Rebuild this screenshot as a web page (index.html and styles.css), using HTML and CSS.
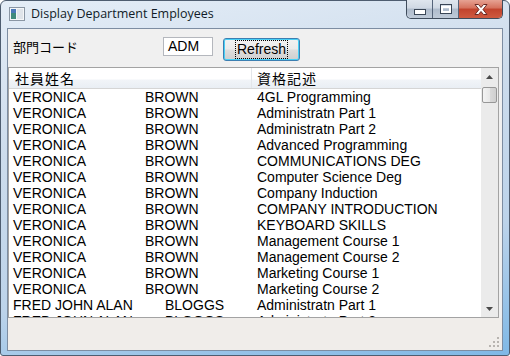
FILE: index.html
```html
<!DOCTYPE html>
<html lang="ja">
<head>
    <meta charset="UTF-8" />
    <title>Display Department Employees</title>
    <link rel="stylesheet" href="styles.css">
</head>
<body>
    <div class="window">
        <div class="titlebar">
            <svg class="app-icon" width="16" height="14" viewBox="0 0 16 14">
                <rect x="0.5" y="0.5" width="15" height="13" fill="#f4f6f8" stroke="#8a96a4"/>
                <rect x="2" y="2" width="5" height="10" fill="#3f8a7c"/>
                <rect x="2" y="2" width="5" height="4" fill="#4a78b8"/>
                <rect x="8" y="2" width="6" height="10" fill="#dfe4ea"/>
            </svg>
            <span class="title">Display Department Employees</span>
            <div class="caption-buttons">
                <div class="cap cap-min">
                    <svg width="12" height="6" viewBox="0 0 12 6"><rect x="0.5" y="0.5" width="11" height="5" fill="#fff" stroke="#3a4656"/></svg>
                </div>
                <div class="cap cap-max">
                    <svg width="12" height="10" viewBox="0 0 12 10"><rect x="0.5" y="0.5" width="11" height="9" fill="none" stroke="#3a4656"/><rect x="2" y="3" width="8" height="5" fill="none" stroke="#fff" stroke-width="2"/></svg>
                </div>
                <div class="cap cap-close">
                    <svg width="16" height="11" viewBox="0 0 16 11"><path d="M2 0.5h3.5l2.5 3 2.5-3h3.5l-4 5 4 5h-3.5l-2.5-3-2.5 3h-3.5l4-5z" fill="#fff" stroke="#6b2a24" stroke-width="1"/></svg>
                </div>
            </div>
        </div>
        <div class="client">
            <div class="toolbar">
                <span class="label">部門コード</span>
                <div class="textbox">ADM</div>
                <button class="btn"><span class="focus">Refresh</span></button>
            </div>
            <div class="listview">
                <div class="lv-main">
                    <div class="lv-header">
                        <div class="hcol1">社員姓名</div>
                        <div class="hcol2">資格記述</div>
                    </div>
                    <div class="lv-body">
                        <div class="row"><div class="c1"><span class="fn">VERONICA</span>BROWN</div><div class="c2">4GL Programming</div></div>
                        <div class="row"><div class="c1"><span class="fn">VERONICA</span>BROWN</div><div class="c2">Administratn Part 1</div></div>
                        <div class="row"><div class="c1"><span class="fn">VERONICA</span>BROWN</div><div class="c2">Administratn Part 2</div></div>
                        <div class="row"><div class="c1"><span class="fn">VERONICA</span>BROWN</div><div class="c2">Advanced Programming</div></div>
                        <div class="row"><div class="c1"><span class="fn">VERONICA</span>BROWN</div><div class="c2">COMMUNICATIONS DEG</div></div>
                        <div class="row"><div class="c1"><span class="fn">VERONICA</span>BROWN</div><div class="c2">Computer Science Deg</div></div>
                        <div class="row"><div class="c1"><span class="fn">VERONICA</span>BROWN</div><div class="c2">Company Induction</div></div>
                        <div class="row"><div class="c1"><span class="fn">VERONICA</span>BROWN</div><div class="c2">COMPANY INTRODUCTION</div></div>
                        <div class="row"><div class="c1"><span class="fn">VERONICA</span>BROWN</div><div class="c2">KEYBOARD SKILLS</div></div>
                        <div class="row"><div class="c1"><span class="fn">VERONICA</span>BROWN</div><div class="c2">Management Course 1</div></div>
                        <div class="row"><div class="c1"><span class="fn">VERONICA</span>BROWN</div><div class="c2">Management Course 2</div></div>
                        <div class="row"><div class="c1"><span class="fn">VERONICA</span>BROWN</div><div class="c2">Marketing Course 1</div></div>
                        <div class="row"><div class="c1"><span class="fn">VERONICA</span>BROWN</div><div class="c2">Marketing Course 2</div></div>
                        <div class="row"><div class="c1"><span class="fn long">FRED JOHN ALAN</span>BLOGGS</div><div class="c2">Administratn Part 1</div></div>
                        <div class="row"><div class="c1"><span class="fn long">FRED JOHN ALAN</span>BLOGGS</div><div class="c2">Administratn Part 2</div></div>
                    </div>
                </div>
                <div class="scrollbar">
                    <div class="sb-btn">
                        <svg width="7" height="4" viewBox="0 0 7 4"><path d="M3.5 0L7 4H0z" fill="#4a4a4a"/></svg>
                    </div>
                    <div class="sb-track">
                        <div class="sb-thumb"></div>
                    </div>
                    <div class="sb-btn">
                        <svg width="7" height="4" viewBox="0 0 7 4"><path d="M0 0h7L3.5 4z" fill="#4a4a4a"/></svg>
                    </div>
                </div>
            </div>
            <div class="statusbar">
                <svg class="grip" width="11" height="11" viewBox="0 0 11 11">
                    <g fill="#b8b4b0">
                        <rect x="8" y="0" width="2" height="2"/>
                        <rect x="4" y="4" width="2" height="2"/>
                        <rect x="8" y="4" width="2" height="2"/>
                        <rect x="0" y="8" width="2" height="2"/>
                        <rect x="4" y="8" width="2" height="2"/>
                        <rect x="8" y="8" width="2" height="2"/>
                    </g>
                </svg>
            </div>
        </div>
    </div>
</body>
</html>
```

FILE: styles.css
```css
html, body {
    margin: 0;
    padding: 0;
}
body {
    width: 510px;
    height: 356px;
    overflow: hidden;
    background: #ffffff;
}
.window {
    box-sizing: border-box;
    width: 510px;
    height: 356px;
    border: 1px solid #4e5d70;
    border-radius: 6px 6px 3px 3px;
    background: linear-gradient(170deg, #e4edf7 0%, #cddcec 35%, #bcd3ea 70%, #7fb8e6 100%);
    padding: 0 6px 4px 6px;
    display: flex;
    flex-direction: column;
}
.titlebar {
    height: 27px;
    display: flex;
    align-items: flex-start;
}
.app-icon {
    margin: 6px 0 0 2px;
}
.title {
    margin: 5px 0 0 6px;
    font-family: "Open Sans", "Liberation Sans", sans-serif;
    font-size: 12.5px;
    line-height: 16px;
    color: #111c28;
}
.caption-buttons {
    margin-left: auto;
    margin-top: -1px;
    display: flex;
    height: 18px;
    border: 1px solid #3f4c5c;
    border-top: none;
    border-radius: 0 0 5px 5px;
    overflow: hidden;
}
.cap {
    display: flex;
    align-items: center;
    justify-content: center;
    height: 18px;
}
.cap-min, .cap-max {
    width: 25px;
    border-right: 1px solid #55647a;
    background: linear-gradient(to bottom, #dfe6ee 0%, #cfd8e3 45%, #aebbcb 50%, #bfcad8 100%);
}
.cap-min {
    border-radius: 0 0 0 5px;
}
.cap-min svg {
    margin-top: 5px;
}
.cap-close {
    width: 43px;
    background: linear-gradient(to bottom, #e6a293 0%, #d5705c 45%, #c1432d 50%, #cf5a40 100%);
}
.client {
    flex: 1;
    border: 1px solid #7d8da2;
    background: #f0f0f0;
    display: flex;
    flex-direction: column;
    font-family: "Liberation Sans", "Noto Sans CJK JP", sans-serif;
}
.toolbar {
    height: 38px;
    box-sizing: border-box;
    display: flex;
    align-items: flex-start;
    padding: 8px 0 0 5px;
}
.label {
    width: 150px;
    margin-top: 1px;
    font-family: "Noto Sans CJK JP", sans-serif;
    font-size: 13px;
    line-height: 18px;
    color: #000;
}
.textbox {
    box-sizing: border-box;
    width: 50px;
    height: 19px;
    border: 1px solid #b4b7bd;
    background: #fff;
    font-size: 14px;
    line-height: 17px;
    padding-left: 4px;
    margin-right: 10px;
}
.btn {
    box-sizing: border-box;
    width: 77px;
    height: 23px;
    margin-top: 1px;
    padding: 0;
    border: 1px solid #3c7fb1;
    border-radius: 3px;
    box-shadow: inset 0 0 0 1px #48d0f6;
    background: linear-gradient(to bottom, #f2f2f2 0%, #ebebeb 48%, #dddddd 52%, #cfcfcf 100%);
    font-family: "Liberation Sans", sans-serif;
    font-size: 14px;
    color: #000;
    display: flex;
    align-items: center;
    justify-content: center;
}
.focus {
    border: 1px dotted #000;
    padding: 0 1px;
    line-height: 17px;
}
.listview {
    box-sizing: border-box;
    width: 491px;
    height: 251px;
    border: 1px solid #a3a3a3;
    background: #fff;
    display: flex;
}
.lv-main {
    flex: 1;
    display: flex;
    flex-direction: column;
    overflow: hidden;
}
.lv-header {
    height: 20px;
    border-bottom: 1px solid #d5d5d5;
    background: linear-gradient(to bottom, #ffffff 0%, #ffffff 55%, #f1f4f8 60%, #e9eef4 100%);
    display: flex;
    font-family: "Noto Sans CJK JP", sans-serif;
    font-size: 14px;
    letter-spacing: 1px;
    line-height: 20px;
}
.hcol1 {
    width: 236px;
    padding-left: 6px;
    border-right: 1px solid #e3e6ea;
}
.hcol2 {
    padding-left: 5px;
}
.lv-body {
    flex: 1;
    overflow: hidden;
}
.row {
    display: flex;
    height: 16px;
    font-size: 14px;
    line-height: 16px;
    color: #000;
    white-space: nowrap;
}
.c1 {
    width: 239px;
    padding-left: 4px;
}
.c2 {
    padding-left: 5px;
}
.fn {
    display: inline-block;
    width: 132px;
}
.fn.long {
    width: 152px;
}
.scrollbar {
    width: 17px;
    display: flex;
    flex-direction: column;
    background: #ebebeb;
}
.sb-btn {
    height: 17px;
    display: flex;
    align-items: center;
    justify-content: center;
}
.sb-track {
    flex: 1;
    padding-top: 2px;
    display: flex;
    justify-content: center;
}
.sb-thumb {
    box-sizing: border-box;
    width: 15px;
    height: 16px;
    border: 1px solid #979797;
    border-radius: 2px;
    background: linear-gradient(to right, #f3f3f3 0%, #e8e8e8 50%, #d9d9d9 55%, #cfcfcf 100%);
}
.statusbar {
    flex: 1;
    background: #f0edea;
    display: flex;
    justify-content: flex-end;
    align-items: flex-end;
    padding: 0 2px 2px 0;
}
```
